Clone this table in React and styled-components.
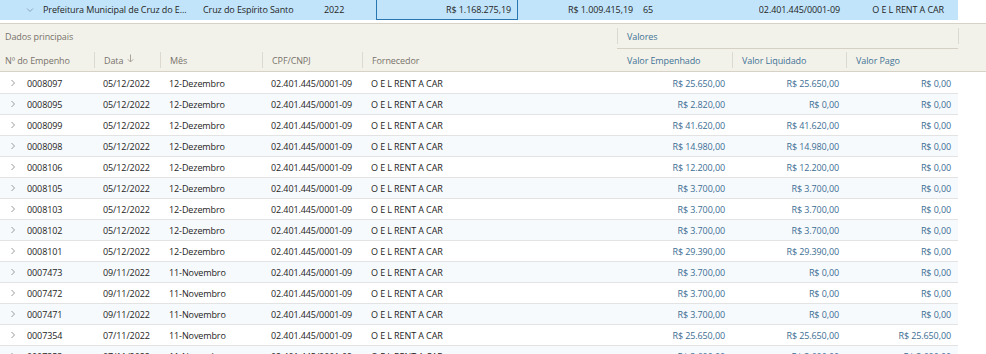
import styled, { createGlobalStyle } from 'styled-components'

// Data
const rows = [
  ['0008097', '05/12/2022', '12-Dezembro', 'R$ 25.650,00', 'R$ 25.650,00', 'R$ 0,00'],
  ['0008095', '05/12/2022', '12-Dezembro', 'R$ 2.820,00', 'R$ 0,00', 'R$ 0,00'],
  ['0008099', '05/12/2022', '12-Dezembro', 'R$ 41.620,00', 'R$ 41.620,00', 'R$ 0,00'],
  ['0008098', '05/12/2022', '12-Dezembro', 'R$ 14.980,00', 'R$ 14.980,00', 'R$ 0,00'],
  ['0008106', '05/12/2022', '12-Dezembro', 'R$ 12.200,00', 'R$ 12.200,00', 'R$ 0,00'],
  ['0008105', '05/12/2022', '12-Dezembro', 'R$ 3.700,00', 'R$ 3.700,00', 'R$ 0,00'],
  ['0008103', '05/12/2022', '12-Dezembro', 'R$ 3.700,00', 'R$ 3.700,00', 'R$ 0,00'],
  ['0008102', '05/12/2022', '12-Dezembro', 'R$ 3.700,00', 'R$ 3.700,00', 'R$ 0,00'],
  ['0008101', '05/12/2022', '12-Dezembro', 'R$ 29.390,00', 'R$ 29.390,00', 'R$ 0,00'],
  ['0007473', '09/11/2022', '11-Novembro', 'R$ 3.700,00', 'R$ 0,00', 'R$ 0,00'],
  ['0007472', '09/11/2022', '11-Novembro', 'R$ 3.700,00', 'R$ 0,00', 'R$ 0,00'],
  ['0007471', '09/11/2022', '11-Novembro', 'R$ 3.700,00', 'R$ 0,00', 'R$ 0,00'],
  ['0007354', '07/11/2022', '11-Novembro', 'R$ 25.650,00', 'R$ 25.650,00', 'R$ 25.650,00'],
  ['0007353', '07/11/2022', '11-Novembro', 'R$ 3.600,00', 'R$ 3.600,00', 'R$ 3.600,00'],
]

const CNPJ = '02.401.445/0001-09'
const FORNECEDOR = 'O E L RENT A CAR'

const Chevron = ({ down }) => (
  <svg width="8" height="8" viewBox="0 0 8 8">
    <path
      d={down ? 'M1 2.5 L4 5.5 L7 2.5' : 'M2.5 1 L5.5 4 L2.5 7'}
      fill="none"
      stroke="currentColor"
      strokeWidth="1"
    />
  </svg>
)

const SortArrow = () => (
  <svg width="7" height="9" viewBox="0 0 7 9">
    <path d="M3.5 0.5 V8 M0.8 5.3 L3.5 8 L6.2 5.3" fill="none" stroke="currentColor" strokeWidth="1" />
  </svg>
)

// App
const App = () => {
  return (
    <Page>
      <GlobalStyle />
      <GroupRow>
        <GroupToggle><Chevron down /></GroupToggle>
        <GroupCell>Prefeitura Municipal de Cruz do E...</GroupCell>
        <GroupCell>Cruz do Espírito Santo</GroupCell>
        <GroupCell>2022</GroupCell>
        <GroupCell $align="right" $selected>R$ 1.168.275,19</GroupCell>
        <GroupCell $align="right">R$ 1.009.415,19</GroupCell>
        <GroupCell>65</GroupCell>
        <GroupCell $align="right">{CNPJ}</GroupCell>
        <GroupCell $align="right" $pad={13}>{FORNECEDOR}</GroupCell>
      </GroupRow>

      <Header>
        <BandRow>
          <BandCell>Dados principais</BandCell>
          <BandCell $values>Valores</BandCell>
          <BandCell $empty />
        </BandRow>
        <HeadRow>
          <HeadCell>Nº do Empenho</HeadCell>
          <HeadCell>Data <SortIcon><SortArrow /></SortIcon></HeadCell>
          <HeadCell>Mês</HeadCell>
          <HeadCell>CPF/CNPJ</HeadCell>
          <HeadCell>Fornecedor</HeadCell>
          <HeadCell $values>Valor Empenhado</HeadCell>
          <HeadCell $values>Valor Liquidado</HeadCell>
          <HeadCell $values>Valor Pago</HeadCell>
          <HeadCell $last />
        </HeadRow>
      </Header>

      <Body>
        {rows.map(([num, data, mes, emp, liq, pago], i) => (
          <Row key={num} $alt={i % 2 === 1}>
            <NumCell>
              <RowToggle><Chevron /></RowToggle>
              {num}
            </NumCell>
            <Cell>{data}</Cell>
            <Cell>{mes}</Cell>
            <Cell>{CNPJ}</Cell>
            <Cell>{FORNECEDOR}</Cell>
            <ValueCell>{emp}</ValueCell>
            <ValueCell>{liq}</ValueCell>
            <ValueCell>{pago}</ValueCell>
          </Row>
        ))}
      </Body>
    </Page>
  )
}

// Styles
const GlobalStyle = createGlobalStyle`
  html, body {
    margin: 0;
    padding: 0;
    background: #ffffff;
    overflow: hidden;
  }
  body {
    font-family: "Open Sans", "Noto Sans", sans-serif;
    font-size: 9px;
    letter-spacing: -0.1px;
    color: #252423;
  }
`

const COLUMNS = '94px 66px 102px 100px 255px 115px 114px 112px'

const Page = styled.div`
  width: 986px;
  height: 354px;
  overflow: hidden;
`

const GroupRow = styled.div`
  display: grid;
  grid-template-columns: 40px 160px 121px 55px 142px 122px 118px 89px 111px;
  width: 958px;
  height: 20px;
  background: #c1e4fb;
`

const GroupToggle = styled.div`
  display: flex;
  align-items: center;
  justify-content: flex-end;
  padding-right: 6px;
  color: #8aa4b8;
`

const GroupCell = styled.div`
  display: flex;
  align-items: center;
  justify-content: ${p => p.$align === 'right' ? 'flex-end' : 'flex-start'};
  padding: 0 ${p => p.$pad ?? (p.$align === 'right' ? 6 : 0)}px 1px 2px;
  white-space: nowrap;
  overflow: hidden;
  color: #252423;
  box-sizing: border-box;
  border: ${p => p.$selected ? '1px solid #2877b0' : '1px solid transparent'};
  border-top: none;
`

const Header = styled.div`
  background: #f3f2ea;
  margin-top: 3px;
  border-top: 1px solid #d6d3c6;
  border-bottom: 1px solid #d6d3c6;
`

const BandRow = styled.div`
  display: grid;
  grid-template-columns: 617px 341px 1fr;
  height: 25px;
`

const BandCell = styled.div`
  display: flex;
  align-items: center;
  padding-left: ${p => p.$values ? '10px' : '5px'};
  color: ${p => p.$values ? '#3f7396' : '#77736a'};
  position: relative;
  border-bottom: ${p => p.$values ? '1px solid #d4d1c4' : '1px solid transparent'};

  &::before {
    content: '';
    position: absolute;
    left: 0;
    top: 4px;
    bottom: 4px;
    width: 1px;
    background: ${p => p.$values || p.$empty ? '#dcdad0' : 'transparent'};
  }
`

const HeadRow = styled.div`
  display: grid;
  grid-template-columns: ${COLUMNS} 1fr;
  height: 22px;
`

const HeadCell = styled.div`
  display: flex;
  align-items: center;
  gap: 4px;
  padding-left: ${p => p.$last ? '0' : '10px'};
  color: ${p => p.$values ? '#3f7396' : '#77736a'};
  white-space: nowrap;
  position: relative;

  &:first-child {
    padding-left: 5px;
  }

  & + &::before {
    content: '';
    position: absolute;
    left: 0;
    top: 3px;
    bottom: 3px;
    width: 1px;
    background: #dcdad0;
  }
`

const SortIcon = styled.span`
  display: inline-flex;
  color: #a8a49a;
  margin-top: -4px;
`

const Body = styled.div`
  width: 958px;
  padding-top: 1px;
`

const Row = styled.div`
  display: grid;
  grid-template-columns: ${COLUMNS};
  height: 20px;
  border-bottom: 1px solid #e3e3e3;
  background: ${p => p.$alt ? '#f7fafd' : '#ffffff'};
`

const Cell = styled.div`
  display: flex;
  align-items: center;
  padding-left: 9px;
  white-space: nowrap;
  overflow: hidden;
  color: #252423;
`

const NumCell = styled(Cell)`
  padding-left: 9px;
`

const RowToggle = styled.span`
  display: inline-flex;
  width: 18px;
  color: #9a9a9a;
`

const ValueCell = styled(Cell)`
  justify-content: flex-end;
  padding-left: 0;
  padding-right: 7px;
  color: #3b6e93;
`

export default App
